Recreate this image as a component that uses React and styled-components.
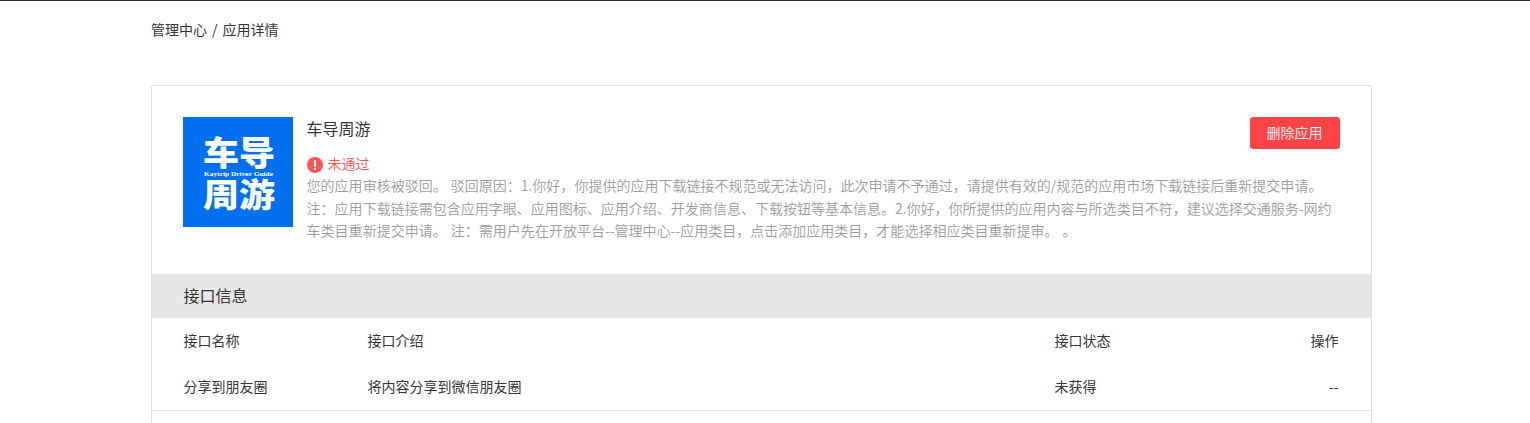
import React from "react";
import styled, { createGlobalStyle } from "styled-components";

const GlobalStyle = createGlobalStyle`
  * {
    box-sizing: border-box;
  }
  body {
    margin: 0;
    background: #fff;
    color: #353535;
    font-family: "Noto Sans CJK SC", sans-serif;
    font-size: 14px;
    line-height: 22.4px;
    overflow: hidden;
  }
`;

const Page = styled.div`
  height: 423px;
  overflow: hidden;
  border-top: 1px solid #2b2b2b;
`;

const Container = styled.div`
  width: 1221px;
  margin-left: 151px;
`;

const Breadcrumb = styled.div`
  display: flex;
  gap: 5px;
  height: 84px;
  padding-top: 17px;
`;

const Card = styled.div`
  height: 400px;
  border: 1px solid #e0e0e0;
  border-radius: 2px;
`;

const AppInfo = styled.div`
  display: flex;
  height: 188px;
  padding: 31px 31px 0;
`;

const Logo = styled.svg`
  flex: none;
  width: 110px;
  height: 110px;
  margin-right: 13.6px;
  background: #0170f0;
`;

const Detail = styled.div`
  flex: 1;
`;

const DetailHead = styled.div`
  display: flex;
  justify-content: space-between;
  height: 35px;
`;

const AppName = styled.div`
  font-size: 16px;
  line-height: 22px;
`;

const DeleteButton = styled.button`
  width: 90px;
  height: 32px;
  padding: 0 1px 2px 0;
  border: 0;
  border-radius: 3px;
  background: #ff4448;
  color: #fff;
  font: 350 14px/30px "Noto Sans CJK SC", sans-serif;
`;

const Status = styled.div`
  display: flex;
  gap: 5px;
  height: 22.3px;
  color: #ff5456;
  font-weight: 350;
  line-height: 22px;

  svg {
    margin-top: 5px;
  }
`;

const Reason = styled.div`
  color: #9c9c9c;
  font-weight: 350;
  letter-spacing: 0.01px;
  word-spacing: 1px;
  white-space: nowrap;
`;

const SectionTitle = styled.div`
  height: 44px;
  padding-left: 31.6px;
  background: #e7e7e7;
  font-size: 16px;
  line-height: 42px;
`;

const Row = styled.div`
  display: grid;
  grid-template-columns: 184px 687px 1fr auto;
  height: 46px;
  padding: 0 32.6px 0 31.6px;
  line-height: 44px;
  ${props => props.$last && "border-bottom: 1px solid #e0e0e0; height: 47px;"}
`;

const reason = [
  "您的应用审核被驳回。 驳回原因：1.你好，你提供的应用下载链接不规范或无法访问，此次申请不予通过，请提供有效的/规范的应用市场下载链接后重新提交申请。",
  "注：应用下载链接需包含应用字眼、应用图标、应用介绍、开发商信息、下载按钮等基本信息。2.你好，你所提供的应用内容与所选类目不符，建议选择交通服务-网约",
  "车类目重新提交申请。 注：需用户先在开放平台--管理中心--应用类目，点击添加应用类目，才能选择相应类目重新提审。 。"
];

const rows = [
  ["接口名称", "接口介绍", "接口状态", "操作"],
  ["分享到朋友圈", "将内容分享到微信朋友圈", "未获得", "--"]
];

const AppLogo = () => (
  <Logo viewBox="0 0 110 110" fill="#fff">
    <g fontFamily="Noto Sans CJK SC, sans-serif" fontWeight="900" fontSize="33">
      <text x="20" y="48" textLength="72" lengthAdjust="spacingAndGlyphs">车导</text>
      <text x="20" y="90" textLength="72" lengthAdjust="spacingAndGlyphs">周游</text>
    </g>
    <text
      x="21"
      y="58.5"
      fontFamily="Liberation Serif, serif"
      fontSize="7"
      fontWeight="700"
      textLength="69"
      lengthAdjust="spacingAndGlyphs"
    >
      Kaytrip Driver Guide
    </text>
  </Logo>
);

const WarnIcon = () => (
  <svg width="16" height="16" viewBox="0 0 16 16">
    <circle cx="8" cy="8" r="8" fill="#ff5456" />
    <path d="M7 3h2v7H7zM7 11h2v2H7z" fill="#fff" />
  </svg>
);

const App = () => (
  <Page>
    <GlobalStyle />
    <Container>
      <Breadcrumb>
        <span>管理中心</span>
        <span>/</span>
        <span>应用详情</span>
      </Breadcrumb>
      <Card>
        <AppInfo>
          <AppLogo />
          <Detail>
            <DetailHead>
              <AppName>车导周游</AppName>
              <DeleteButton>删除应用</DeleteButton>
            </DetailHead>
            <Status>
              <WarnIcon />
              <span>未通过</span>
            </Status>
            {reason.map((line, i) => (
              <Reason key={i}>{line}</Reason>
            ))}
          </Detail>
        </AppInfo>
        <SectionTitle>接口信息</SectionTitle>
        {rows.map((row, i) => (
          <Row key={i} $last={i === rows.length - 1}>
            {row.map(cell => (
              <span key={cell}>{cell}</span>
            ))}
          </Row>
        ))}
      </Card>
    </Container>
  </Page>
);

export default App;
